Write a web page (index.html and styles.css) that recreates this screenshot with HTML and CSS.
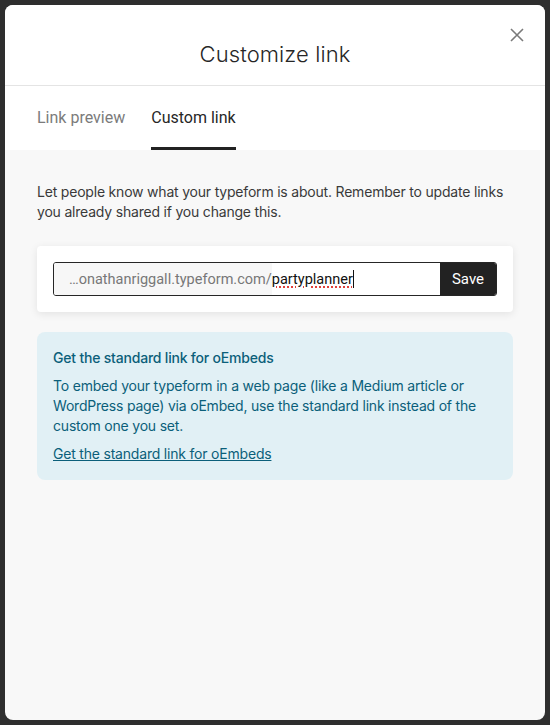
FILE: index.html
```html
<!DOCTYPE html>
<html>
<head>
<meta charset="utf-8">
<link rel="stylesheet" href="styles.css">
</head>
<body>
<div class="modal">
  <header class="modal-header">
    <h1 class="modal-title">Customize link</h1>
    <button class="close" aria-label="Close">
      <svg width="14" height="14" viewBox="0 0 14 14"><path d="M1 1L13 13M13 1L1 13" stroke="#7a7a7a" stroke-width="1.6" fill="none"/></svg>
    </button>
  </header>
  <nav class="tabs">
    <span class="tab">Link preview</span>
    <span class="tab active">Custom link</span>
  </nav>
  <main class="content">
    <p class="intro">Let people know what your typeform is about. Remember to update links you already shared if you change this.</p>
    <div class="card">
      <div class="field">
        <span class="prefix">…onathanriggall.typeform.com/</span>
        <span class="value"><span class="spell">partyplanner</span><span class="caret"></span></span>
        <button class="save">Save</button>
      </div>
    </div>
    <div class="info">
      <h2 class="info-title">Get the standard link for oEmbeds</h2>
      <p class="info-text">To embed your typeform in a web page (like a Medium article or WordPress page) via oEmbed, use the standard link instead of the custom one you set.</p>
      <a class="info-link" href="#">Get the standard link for oEmbeds</a>
    </div>
  </main>
</div>
</body>
</html>
```
FILE: styles.css
```css
* { box-sizing: border-box; }
html, body { margin: 0; padding: 0; }
body {
  background: #2e2e2e;
  width: 550px;
  height: 725px;
  overflow: hidden;
  font-family: Inter, "Noto Sans", sans-serif;
  padding: 5px;
}
.modal {
  width: 540px;
  height: 715px;
  background: #f8f8f8;
  border-radius: 8px;
  overflow: hidden;
  display: flex;
  flex-direction: column;
}
.modal-header {
  height: 81px;
  background: #fff;
  border-bottom: 1px solid #e4e4e4;
  display: flex;
  align-items: center;
  justify-content: center;
  position: relative;
}
.modal-title {
  margin: 0;
  font-weight: 300;
  font-size: 22px;
  color: #262626;
  letter-spacing: 0.1px;
  padding-top: 18px;
}
.close {
  position: absolute;
  right: 21px;
  top: 23px;
  border: 0;
  background: none;
  padding: 0;
  width: 14px;
  height: 14px;
  display: flex;
}
.tabs {
  height: 64px;
  background: #fff;
  display: flex;
  gap: 26px;
  padding-left: 32px;
}
.tab {
  font-family: Roboto, "Liberation Sans", sans-serif;
  font-size: 16px;
  color: #7b7b7b;
  display: flex;
  align-items: center;
  padding-top: 1px;
  border-bottom: 3px solid transparent;
}
.tab.active {
  color: #262626;
  border-bottom-color: #222;
}
.content {
  padding: 32px 32px 0 32px;
  display: flex;
  flex-direction: column;
}
.intro {
  margin: 0;
  font-size: 14px;
  letter-spacing: -0.2px;
  line-height: 20px;
  color: #3a3a3a;
}
.card {
  margin-top: 24px;
  background: #fff;
  border-radius: 4px;
  box-shadow: 0 2px 8px rgba(0,0,0,0.09);
  padding: 16px;
}
.field {
  height: 34px;
  border: 1px solid #262626;
  border-radius: 3px;
  display: flex;
  align-items: stretch;
  overflow: hidden;
  font-family: Roboto, "Liberation Sans", sans-serif;
  font-size: 14.5px;
}
.prefix {
  background: #f7f7f7;
  color: #777;
  display: flex;
  align-items: center;
  padding-left: 15px;
}
.value {
  flex: 1;
  background: #fff;
  color: #111;
  display: flex;
  align-items: center;
}
.spell {
  text-decoration: underline dotted #e0403a;
  text-decoration-thickness: 1.5px;
  text-underline-offset: 3px;
}
.caret {
  width: 1px;
  height: 18px;
  background: #111;
}
.save {
  width: 56px;
  border: 0;
  background: #222;
  color: #fff;
  font-family: Roboto, "Liberation Sans", sans-serif;
  font-size: 15px;
  padding: 0;
}
.info {
  margin-top: 20px;
  background: #e1f0f5;
  border-radius: 8px;
  padding: 16px;
  color: #0b5f7a;
  display: flex;
  flex-direction: column;
  letter-spacing: -0.2px;
}
.info-title {
  margin: 0;
  font-size: 14px;
  font-weight: 500;
  line-height: 20px;
}
.info-text {
  margin: 8px 0 0 0;
  font-size: 14px;
  line-height: 20px;
}
.info-link {
  margin-top: 8px;
  font-size: 14px;
  line-height: 20px;
  color: #0b5f7a;
  text-decoration: underline;
}
```
